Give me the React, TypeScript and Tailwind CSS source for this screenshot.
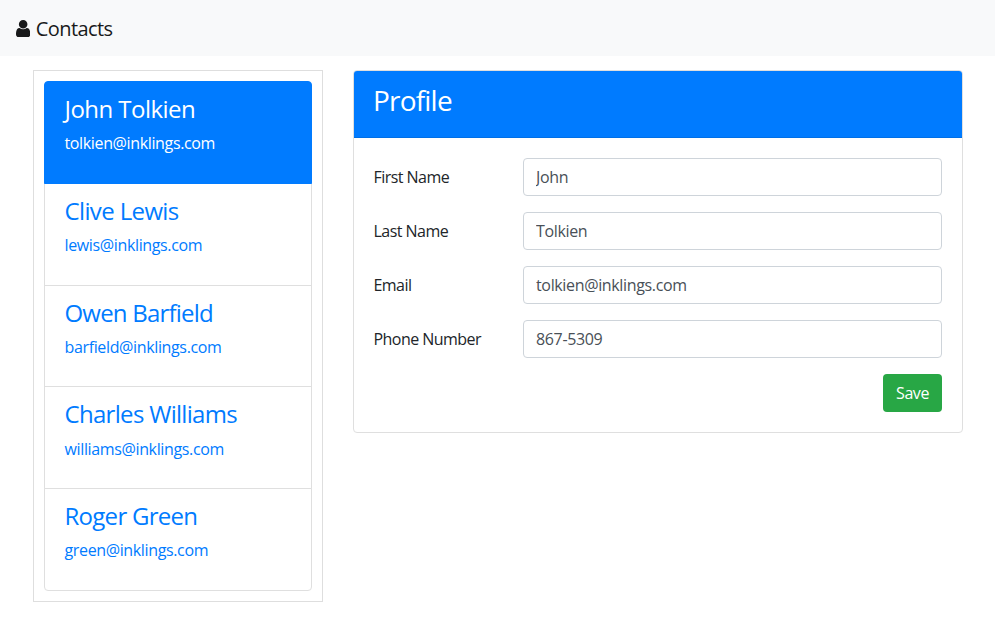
const contacts = [
  { name: "John Tolkien", email: "tolkien@inklings.com", tracking: "tracking-[-0.54px]" },
  { name: "Clive Lewis", email: "lewis@inklings.com", tracking: "tracking-[-0.63px]" },
  { name: "Owen Barfield", email: "barfield@inklings.com", tracking: "tracking-[-0.8px]" },
  { name: "Charles Williams", email: "williams@inklings.com", tracking: "tracking-[-0.69px]" },
  { name: "Roger Green", email: "green@inklings.com", tracking: "tracking-[-0.72px]" },
];

const fields = [
  { label: "First Name", value: "John" },
  { label: "Last Name", value: "Tolkien" },
  { label: "Email", value: "tolkien@inklings.com" },
  { label: "Phone Number", value: "867-5309" },
];

function UserIcon() {
  return (
    <svg viewBox="0 128 1280 1536" className="mt-px h-[17.2px] w-[14.3px]" fill="currentColor" aria-hidden="true">
      <path d="M1280 1399q0 109-62.5 187t-150.5 78h-854q-88 0-150.5-78t-62.5-187q0-85 8.5-160.5t31.5-152 58.5-131 94-89 134.5-34.5q131 128 313 128t313-128q76 0 134.5 34.5t94 89 58.5 131 31.5 152 8.5 160.5zm-256-887q0 159-112.5 271.5t-271.5 112.5-271.5-112.5-112.5-271.5 112.5-271.5 271.5-112.5 271.5 112.5 112.5 271.5z" />
    </svg>
  );
}

function ContactList() {
  return (
    <aside className="w-[290px] shrink-0 border border-[#dedede] p-[10px]">
      <ul>
        {contacts.map((contact, i) => (
          <li
            key={contact.name}
            className={
              "border pr-5 pl-[19.5px] py-3 -mb-px last:mb-0 first:rounded-t last:rounded-b " +
              (i === 0
                ? "relative z-10 border-[#007bff] bg-[#007bff] text-white"
                : "border-[#dfdfdf] bg-white text-[#007bff]")
            }
          >
            <h4 className={"mb-[7.4px] pt-px text-[24px] leading-[28.8px] " + contact.tracking}>{contact.name}</h4>
            <p className="mb-[15.6px] text-base leading-6 tracking-[-0.36px]">{contact.email}</p>
          </li>
        ))}
      </ul>
    </aside>
  );
}

function ProfileCard() {
  return (
    <section className="w-[610px] self-start rounded border border-[#dfdfdf]">
      <header className="rounded-t-[3px] border-b border-[#006fe6] bg-[#007bff] pr-5 pl-[19px] py-3 text-white">
        <h3 className="mb-[7px] pt-px text-[28px] leading-[33.6px] tracking-[-0.8px]">Profile</h3>
      </header>
      <form className="p-5">
        {fields.map((field) => (
          <div key={field.label} className="mb-4 -ml-[0.5px] flex items-center">
            <label className="w-[149.5px] shrink-0 leading-6 tracking-[-0.54px]">{field.label}</label>
            <input
              className="h-[38px] min-w-0 flex-1 rounded border border-[#ced4da] bg-white px-3 tracking-[-0.35px] text-[#495057]"
              defaultValue={field.value}
            />
          </div>
        ))}
        <div className="flex justify-end">
          <button type="button" className="h-[38px] w-[59px] rounded bg-[#28a745] text-center text-white tracking-[-0.45px]">
            Save
          </button>
        </div>
      </form>
    </section>
  );
}

export default function App() {
  return (
    <div className="min-h-screen bg-white font-['Open_Sans',sans-serif] text-base tracking-[-0.35px] text-[#212529]">
      <nav className="flex h-14 items-center gap-[5.5px] bg-[#f8f9fa] px-4 text-[#18191a]">
        <UserIcon />
        <span className="pt-[2px] text-xl tracking-[-0.6px]">Contacts</span>
      </nav>
      <main className="flex gap-[30px] pt-[14px] pl-[33px]">
        <ContactList />
        <ProfileCard />
      </main>
    </div>
  );
}
